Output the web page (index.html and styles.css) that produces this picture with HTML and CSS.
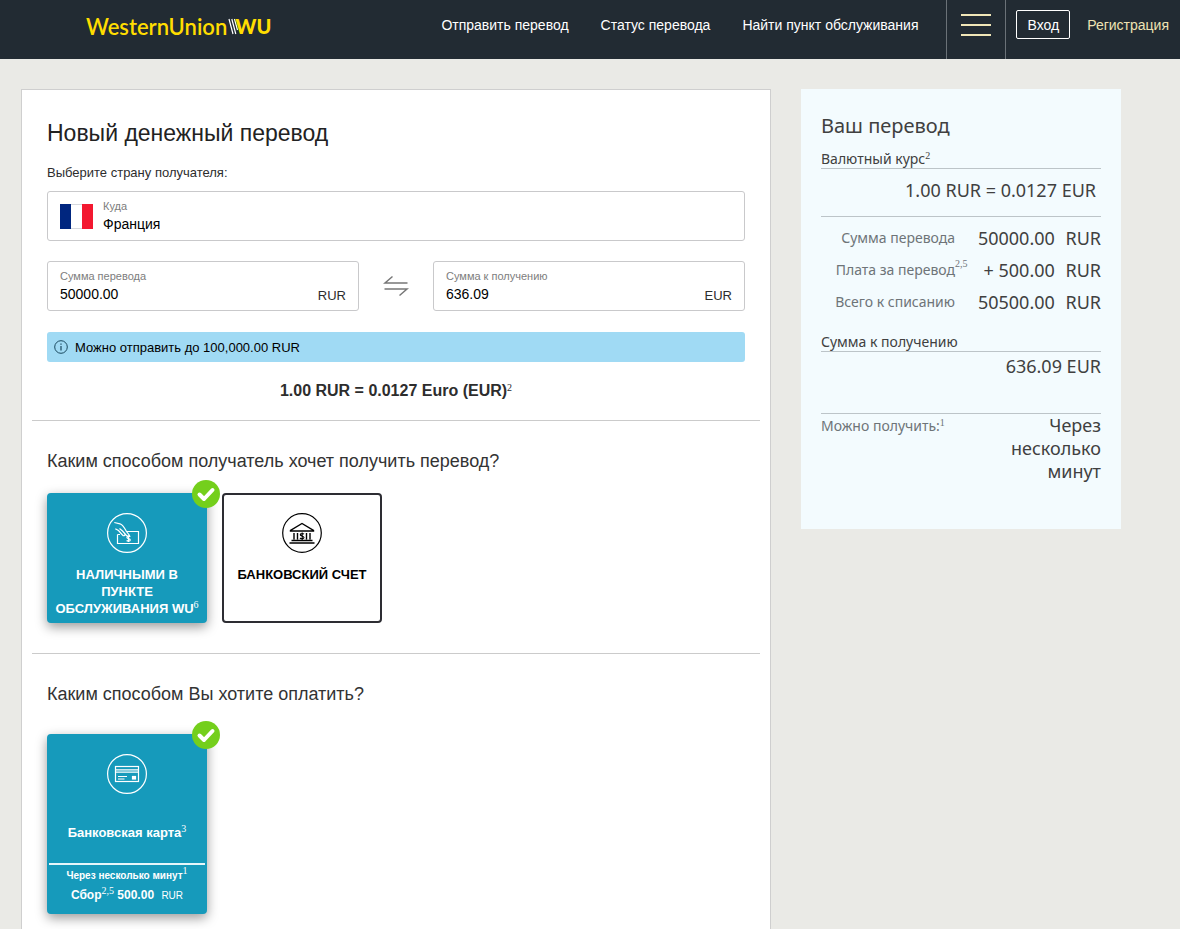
FILE: index.html
```html
<!DOCTYPE html>
<html lang="ru">
<head>
<meta charset="utf-8">
<meta name="viewport" content="width=device-width, initial-scale=1">
<title>Новый денежный перевод</title>
<link rel="stylesheet" href="styles.css">
</head>
<body>
<header class="topbar">
  <a class="logo" href="#"><span class="logo-name">WesternUnion</span><svg class="logo-stripes" width="12" height="17" viewBox="0 0 12 17" fill="none" stroke="#fff" stroke-width="1.200" aria-hidden="true"><path d="M2 1L6 16M4.800 1L8.800 16M7.500 1L10.500 12"/></svg><span class="logo-mark">WU</span></a>
  <nav class="nav">
    <a href="#">Отправить перевод</a>
    <a href="#">Статус перевода</a>
    <a href="#">Найти пункт обслуживания</a>
  </nav>
  <button class="menu" type="button" aria-label="Меню"><span></span><span></span><span></span></button>
  <div class="account">
    <button class="login" type="button">Вход</button>
    <a class="register" href="#">Регистрация</a>
  </div>
</header>

<main class="page">
  <form class="card">
    <h1>Новый денежный перевод</h1>
    <p class="hint">Выберите страну получателя:</p>
    <div class="field country">
      <svg width="33" height="25" viewBox="0 0 33 25" aria-hidden="true"><rect width="33" height="25" fill="#d6d9de"/><rect x="11" y="1" width="11" height="23" fill="#fff"/><rect width="11" height="25" fill="#00267f"/><rect x="22" width="11" height="25" fill="#f31830"/></svg>
      <div class="field-body">
        <label for="to">Куда</label>
        <input id="to" type="text" value="Франция">
      </div>
    </div>
    <div class="amounts">
      <div class="field">
        <div class="field-body">
          <label for="send">Сумма перевода</label>
          <input id="send" type="text" value="50000.00">
        </div>
        <span class="currency">RUR</span>
      </div>
      <svg class="swap" width="26" height="22" viewBox="0 0 26 22" fill="none" stroke="#777" stroke-width="1.500" aria-hidden="true"><path d="M24.500 8H2L9.500 1.500M1.500 14H24L16.500 20.500"/></svg>
      <div class="field">
        <div class="field-body">
          <label for="receive">Сумма к получению</label>
          <input id="receive" type="text" value="636.09">
        </div>
        <span class="currency">EUR</span>
      </div>
    </div>
    <p class="notice">
      <svg width="14" height="14" viewBox="0 0 14 14" fill="none" stroke="#1b4a60" aria-hidden="true"><circle cx="7" cy="7" r="6.300"/><path d="M7 6V10.500M7 3.500V4.800" stroke-width="1.200"/></svg>
      Можно отправить до 100,000.00 RUR
    </p>
    <p class="rate">1.00 RUR = 0.0127 Euro (EUR)<sup>2</sup></p>
    <hr>
    <h2>Каким способом получатель хочет получить перевод?</h2>
    <div class="tiles">
      <label class="tile selected">
        <input type="radio" name="payout" checked>
        <svg class="badge" width="28" height="28" viewBox="0 0 28 28" aria-hidden="true"><circle cx="14" cy="14" r="14" fill="#74cf1c"/><path d="M7.500 14.500L12 19L20.500 10" fill="none" stroke="#fff" stroke-width="4" stroke-linecap="round" stroke-linejoin="round"/></svg>
        <svg width="40" height="40" viewBox="0 0 40 40" fill="none" stroke="currentColor" stroke-width="1.200" aria-hidden="true"><circle cx="20" cy="20" r="19.400"/><path d="M10.500 21.500V30.500H31.500V18.500H19.500M7.300 9.500L13 10.800C16 11.500 17 14 19.500 18.500L22.500 22.500C21.500 23.800 20 23 19 22L15.500 18L12.500 15.500M8.300 15.700L11.500 17.500L15.500 22C16.500 23.200 18.300 23 17.800 21.200M10.500 21.500H13"/><path d="M23.300 23.800C22.300 22.900 19.800 23 19.900 24.500C20.100 25.900 23.300 25.300 23.300 27C23.200 28.400 20.500 28.400 19.600 27.500M21.500 22.500V29"/></svg>
        <span class="tile-title">НАЛИЧНЫМИ В ПУНКТЕ ОБСЛУЖИВАНИЯ WU<sup>6</sup></span>
      </label>
      <label class="tile">
        <input type="radio" name="payout">
        <svg width="40" height="40" viewBox="0 0 40 40" fill="none" stroke="currentColor" stroke-width="1.400" aria-hidden="true"><circle cx="20" cy="20" r="19.300" stroke-width="1.200"/><path d="M8.500 18V17.500L20 10.500L31.500 17.500V18ZM9.500 27.500H30.500M7.500 30H32.500M12 20V26.500M15.500 20V26.500M24.500 20V26.500M28 20V26.500"/><path d="M22 21.200C21 20.200 18.200 20.400 18.300 21.800C18.500 23.200 22 22.700 22 24.500C21.900 26 19 26 18 25M20.200 19.500V27" stroke-width="1.100"/></svg>
        <span class="tile-title">БАНКОВСКИЙ СЧЕТ</span>
      </label>
    </div>
    <hr>
    <h2>Каким способом Вы хотите оплатить?</h2>
    <div class="tiles pay">
      <label class="tile selected">
        <input type="radio" name="payment" checked>
        <svg class="badge" width="28" height="28" viewBox="0 0 28 28" aria-hidden="true"><circle cx="14" cy="14" r="14" fill="#74cf1c"/><path d="M7.500 14.500L12 19L20.500 10" fill="none" stroke="#fff" stroke-width="4" stroke-linecap="round" stroke-linejoin="round"/></svg>
        <svg width="40" height="40" viewBox="0 0 40 40" fill="none" stroke="currentColor" stroke-width="1.200" aria-hidden="true"><circle cx="20" cy="20" r="19.400"/><rect x="8.500" y="12.500" width="23" height="15"/><path d="M8.500 15.800H31.500M8.500 18.200H31.500M11 22.500H20M11 25H17.500"/><rect x="25.500" y="22.500" width="3" height="2.500" fill="currentColor"/></svg>
        <span class="tile-title">Банковская карта<sup>3</sup></span>
        <span class="tile-info">
          <span class="tile-time">Через несколько минут<sup>1</sup></span>
          <span class="tile-fee">Сбор<sup>2,5</sup> 500.00 <small>RUR</small></span>
        </span>
      </label>
    </div>
  </form>

  <aside class="summary">
    <h2>Ваш перевод</h2>
    <h3>Валютный курс<sup>2</sup></h3>
    <p class="summary-rate">1.00 RUR = 0.0127 EUR</p>
    <table class="totals">
      <tr><th scope="row">Сумма перевода</th><td class="sum">50000.00</td><td>RUR</td></tr>
      <tr><th scope="row">Плата за перевод<sup>2,5</sup></th><td class="sum">+ 500.00</td><td>RUR</td></tr>
      <tr><th scope="row">Всего к списанию</th><td class="sum">50500.00</td><td>RUR</td></tr>
    </table>
    <h3>Сумма к получению</h3>
    <p class="payout">636.09 EUR</p>
    <div class="delivery">
      <span class="delivery-label">Можно получить:<sup>1</sup></span>
      <span class="delivery-time">Через несколько минут</span>
    </div>
  </aside>
</main>
</body>
</html>
```
FILE: styles.css
```css
* {
  box-sizing: border-box;
}

body {
  margin: 0;
  min-height: 100vh;
  display: flex;
  flex-direction: column;
  background: #eaeae6;
  color: #2d2d2d;
  font-family: "Liberation Sans", Arial, sans-serif;
}

h1, h2, h3, p {
  margin: 0;
  font-weight: 400;
}

a {
  color: inherit;
  text-decoration: none;
}

button {
  font: inherit;
  cursor: pointer;
}

sup {
  font-family: "Liberation Serif", serif;
  font-size: 10px;
  font-weight: 400;
  line-height: 0;
  vertical-align: 5px;
}

/* Header */

.topbar {
  display: flex;
  height: 59px;
  padding-left: 86px;
  background: #222b33;
  color: #fff;
  font-size: 14px;
}

.logo {
  display: flex;
  align-items: center;
  align-self: flex-start;
  height: 52px;
  margin-right: auto;
  color: #ffdd00;
  font-family: Lato, sans-serif;
  font-size: 22px;
}

.logo-name {
  font-weight: 600;
}

.logo-stripes {
  margin-right: -4px;
}

.logo-mark {
  font-size: 20px;
  font-weight: 900;
}

.nav {
  display: flex;
  gap: 32px;
  padding: 16px 28px 0 0;
  line-height: 18px;
}

.menu {
  display: flex;
  flex-direction: column;
  gap: 8px;
  width: 60px;
  padding: 14px;
  border: solid #6b7278;
  border-width: 0 1px;
  background: none;
}

.menu span {
  width: 30px;
  height: 2px;
  background: #f0e6b8;
}

.account {
  display: flex;
  align-items: flex-start;
  gap: 17px;
  padding: 10px 11px 0 10px;
}

.login {
  height: 29px;
  padding: 0 10px;
  border: 1px solid #fff;
  border-radius: 2px;
  background: none;
  color: #fff;
}

.register {
  padding-top: 6px;
  color: #efe3b4;
  line-height: 18px;
}

/* Page */

.page {
  flex: 1;
  display: flex;
  gap: 30px;
  padding: 30px 59px 0 21px;
}

.card {
  flex: 1;
  padding: 27px 25px 15px;
  border: 1px solid #cfcfcf;
  border-bottom: 0;
  background: #fff;
}

.card h1 {
  color: #222;
  font-size: 23px;
  line-height: 32px;
}

.hint {
  margin: 15px 0 9px;
  font-size: 13px;
  line-height: 18px;
}

.field {
  display: flex;
  align-items: center;
  height: 50px;
  padding: 0 12px;
  border: 1px solid #c9c9cb;
  border-radius: 3px;
}

.country {
  gap: 10px;
}

.field-body {
  flex: 1;
  min-width: 0;
}

.field label {
  display: block;
  color: #7d7d7d;
  font-size: 11px;
  line-height: 16px;
}

.field input {
  display: block;
  width: 100%;
  height: 20px;
  padding: 0;
  border: 0;
  background: none;
  color: #000;
  font: inherit;
  font-size: 14px;
}

.currency {
  padding-top: 18px;
  font-size: 13px;
}

.amounts {
  display: grid;
  grid-template-columns: 1fr 26px 1fr;
  align-items: center;
  gap: 24px;
  margin: 20px 0 21px;
}

.notice {
  display: flex;
  align-items: center;
  gap: 7px;
  height: 30px;
  padding: 0 7px;
  border-radius: 3px;
  background: #a0daf4;
  color: #000;
  font-size: 13px;
}

.rate {
  margin: 17px 0;
  font-size: 16px;
  font-weight: 700;
  line-height: 24px;
  text-align: center;
}

.card hr {
  height: 1px;
  margin: 0 -15px 28px;
  border: 0;
  background: #cbcbcb;
}

.card h2 {
  color: #333;
  font-size: 18px;
  line-height: 24px;
}

/* Option tiles */

.tiles {
  display: flex;
  gap: 15px;
  margin: 20px 0 30px;
}

.pay {
  margin: 28px 0 0;
}

.tile {
  position: relative;
  display: flex;
  flex-direction: column;
  align-items: center;
  width: 160px;
  min-height: 130px;
  padding: 18px 0 0;
  border: 2px solid #2d2d33;
  border-radius: 4px;
  color: #000;
  text-align: center;
  cursor: pointer;
}

.tile input {
  position: absolute;
  opacity: 0;
}

.selected {
  border-color: #169abb;
  background: #169abb;
  box-shadow: 0 4px 12px rgba(0, 0, 0, 0.4);
  color: #fff;
}

.badge {
  position: absolute;
  top: -15px;
  right: -15px;
}

.tile-title {
  margin-top: 13px;
  font-size: 13px;
  font-weight: 700;
  line-height: 17px;
}

.pay .tile {
  min-height: 180px;
}

.pay .tile-title {
  margin-top: 30px;
}

.tile-info {
  display: flex;
  flex-direction: column;
  align-self: stretch;
  margin-top: 22px;
  border-top: 2px solid #e6f6fa;
  font-weight: 700;
}

.tile-time {
  font-size: 10px;
  line-height: 22px;
}

.tile-fee {
  font-size: 12px;
  line-height: 16px;
}

.tile-fee small {
  margin-left: 4px;
  font-size: 10px;
  font-weight: 400;
}

/* Summary */

.summary {
  align-self: flex-start;
  width: 320px;
  padding: 23px 20px 46px;
  background: #f3fbfe;
  color: #404040;
  font-family: "Noto Sans", "Open Sans", sans-serif;
  font-size: 18px;
}

.summary h2 {
  margin-bottom: 10px;
  font-size: 20px;
  line-height: 28px;
}

.summary h3 {
  border-bottom: 1px solid #bcc4c8;
  font-size: 14px;
  line-height: 18px;
}

.summary-rate {
  padding: 7px 5px 12px 0;
  border-bottom: 1px solid #bcc4c8;
  line-height: 28px;
  text-align: right;
}

.totals {
  width: 100%;
  margin: 5px 0 15px;
  border-spacing: 0;
  text-align: right;
}

.totals th,
.totals td {
  height: 32px;
  padding: 0;
  font-weight: 400;
  line-height: 24px;
  white-space: nowrap;
}

.totals th {
  position: relative;
  width: 134px;
  color: #6e7478;
  font-size: 14px;
}

.totals th sup {
  position: absolute;
  top: 10px;
  left: 100%;
}

.payout {
  padding-bottom: 33px;
  border-bottom: 1px solid #bcc4c8;
  line-height: 28px;
  text-align: right;
}

.delivery {
  display: flex;
  justify-content: space-between;
  line-height: 23px;
}

.delivery-label {
  color: #6e7478;
  font-size: 14px;
}

.delivery-time {
  width: 100px;
  text-align: right;
}
```
